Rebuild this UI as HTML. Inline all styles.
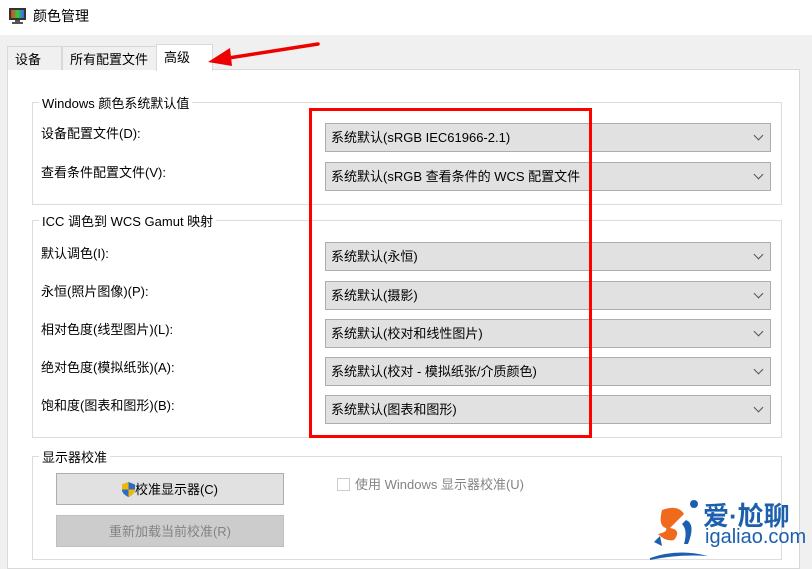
<!DOCTYPE html>
<html><head><meta charset="utf-8"><style>
*{margin:0;padding:0;box-sizing:border-box}
body{width:812px;height:564px;overflow:hidden;background:#f0f0f0;font-family:"Liberation Sans","Noto Sans CJK SC",sans-serif;font-size:13px;color:#000;position:relative}
.a{position:absolute;white-space:nowrap}
.title{left:0;top:0;width:812px;height:35px;background:#fff}
.panel{left:7px;top:69px;width:793px;height:500px;background:#fff;border:1px solid #d9d9d9}
.grp{position:absolute;border:1px solid #dcdcdc}
.gl{position:absolute;background:#fff;padding:0 3px;font-size:13px}
.cb{position:absolute;left:325px;width:446px;height:29px;background:#e1e1e1;border:1px solid #adadad;padding:3px 0 0 5px}
.cb:after{content:"";position:absolute;right:8px;top:8px;width:6px;height:6px;border-right:1.3px solid #555;border-bottom:1.3px solid #555;transform:rotate(45deg)}
.lb{position:absolute;left:41px}
.tab{position:absolute;top:46px;height:24px;border:1px solid #d9d9d9;border-bottom:none;background:#f0f0f0;padding:2px 0 0 7px}
.btn{position:absolute;left:56px;width:228px;height:32px;border:1px solid #adadad;background:#e1e1e1;text-align:center;padding-top:5px}
</style></head><body>
<div class="a title"></div>
<svg class="a" style="left:9px;top:8px" width="17" height="16"><rect x="0" y="0" width="17" height="12" fill="#333"/><rect x="2" y="2" width="13" height="8" fill="url(#g)"/><defs><linearGradient id="g"><stop offset="0" stop-color="#e33"/><stop offset=".5" stop-color="#3c3"/><stop offset="1" stop-color="#36f"/></linearGradient></defs><rect x="6" y="12" width="5" height="2" fill="#555"/><rect x="3" y="14" width="11" height="2" fill="#555"/></svg>
<div class="a" style="left:33px;top:6px;font-size:14px">颜色管理</div>
<div class="a panel"></div>
<div class="tab" style="left:7px;width:55px">设备</div>
<div class="tab" style="left:62px;width:95px">所有配置文件</div>
<div class="tab" style="left:156px;top:44px;height:27px;width:57px;background:#fff">高级</div>

<div class="grp" style="left:32px;top:102px;width:750px;height:103px"></div>
<div class="gl" style="left:39px;top:93px">Windows 颜色系统默认值</div>
<div class="lb" style="top:123px">设备配置文件(D):</div>
<div class="lb" style="top:162px">查看条件配置文件(V):</div>
<div class="cb" style="top:123px">系统默认(sRGB IEC61966-2.1)</div>
<div class="cb" style="top:162px">系统默认(sRGB 查看条件的 WCS 配置文件</div>

<div class="grp" style="left:32px;top:220px;width:750px;height:218px"></div>
<div class="gl" style="left:39px;top:211px">ICC 调色到 WCS Gamut 映射</div>
<div class="lb" style="top:243px">默认调色(I):</div>
<div class="lb" style="top:281px">永恒(照片图像)(P):</div>
<div class="lb" style="top:319px">相对色度(线型图片)(L):</div>
<div class="lb" style="top:357px">绝对色度(模拟纸张)(A):</div>
<div class="lb" style="top:395px">饱和度(图表和图形)(B):</div>
<div class="cb" style="top:242px">系统默认(永恒)</div>
<div class="cb" style="top:281px">系统默认(摄影)</div>
<div class="cb" style="top:319px">系统默认(校对和线性图片)</div>
<div class="cb" style="top:357px">系统默认(校对 - 模拟纸张/介质颜色)</div>
<div class="cb" style="top:395px">系统默认(图表和图形)</div>

<div class="grp" style="left:32px;top:456px;width:750px;height:104px"></div>
<div class="gl" style="left:39px;top:447px">显示器校准</div>
<div class="btn" style="top:473px"><svg width="13" height="15" style="vertical-align:-3px"><path d="M6.5 0L13 2.5V7Q13 12 6.5 15Q0 12 0 7V2.5Z" fill="#2b6cc4"/><path d="M6.5 0V7.5H13V7Q13 12 6.5 15Z" fill="#f2b705"/><path d="M6.5 7.5H0Q0 12 6.5 15Z" fill="#2b6cc4"/><path d="M6.5 0V7.5H0V2.5Z" fill="#f2b705"/></svg>校准显示器(C)</div>
<div class="btn" style="top:515px;background:#ccc;border-color:#bfbfbf;color:#838383">重新加载当前校准(R)</div>
<div class="a" style="left:337px;top:478px;width:13px;height:13px;border:1px solid #ccc;background:#fff"></div>
<div class="a" style="left:355px;top:474px;color:#838383">使用 Windows 显示器校准(U)</div>

<div class="a" style="left:309px;top:108px;width:283px;height:330px;border:3px solid #f00"></div>
<svg class="a" style="left:200px;top:38px" width="125" height="32"><line x1="118" y1="6" x2="22" y2="21" stroke="#e00" stroke-width="3.5" stroke-linecap="round"/><path d="M8 24L30 10L32 28Z" fill="#e00"/></svg>

<svg class="a" style="left:648px;top:500px" width="60" height="60"><path d="M14 10Q30 4 36 14Q30 20 22 28Q34 30 26 40Q18 42 10 34Q20 32 18 28Q10 26 14 10Z" fill="#f06a1e"/><circle cx="46" cy="4" r="4" fill="#1b5fae"/><path d="M38 20Q48 24 40 44L36 44Q40 30 34 24Z" fill="#1b5fae"/><path d="M2 58Q30 48 60 56Q30 54 2 60Z" fill="#1b5fae"/><path d="M6 42L12 36L14 46Z" fill="#1b5fae"/></svg>
<div class="a" style="left:703px;top:496px;font-size:26px;color:#1b5fae;font-weight:bold">爱·尬聊</div>
<div class="a" style="left:705px;top:526px;font-size:20px;color:#1b5fae">igaliao.com</div>
</body></html>
